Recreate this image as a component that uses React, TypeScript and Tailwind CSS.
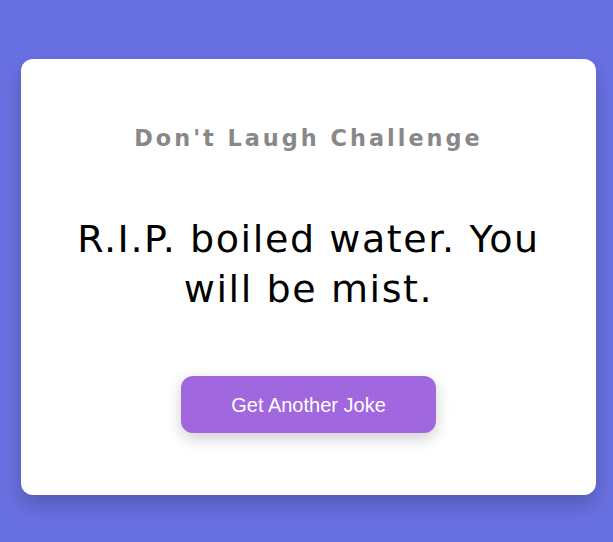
export default function App() {
  return (
    <div className="min-h-[542px] bg-[#6970e1] pt-[59px] pb-[47px]">
      <div className="ml-[21px] flex h-[436px] w-[575px] flex-col items-center rounded-xl bg-white px-10 shadow-[0_10px_20px_rgba(0,0,0,0.2)]">
        <h1 className="mt-[65px] font-['DejaVu_Sans',Verdana,sans-serif] text-[22.4px] font-bold leading-[28px] tracking-[3px] text-[#888888]">
          Don't Laugh Challenge
        </h1>
        <p className="mt-[62px] max-w-[495px] text-center font-['DejaVu_Sans',Verdana,sans-serif] text-[38px] leading-[50px] tracking-[1.6px] text-black">
          R.I.P. boiled water. You will be mist.
        </p>
        <button className="mt-[62px] h-[57px] w-[255px] rounded-xl bg-[#a067df] font-['Liberation_Sans',Arial,sans-serif] text-[20px] text-white shadow-[0_5px_15px_rgba(0,0,0,0.2)]">
          Get Another Joke
        </button>
      </div>
    </div>
  );
}
